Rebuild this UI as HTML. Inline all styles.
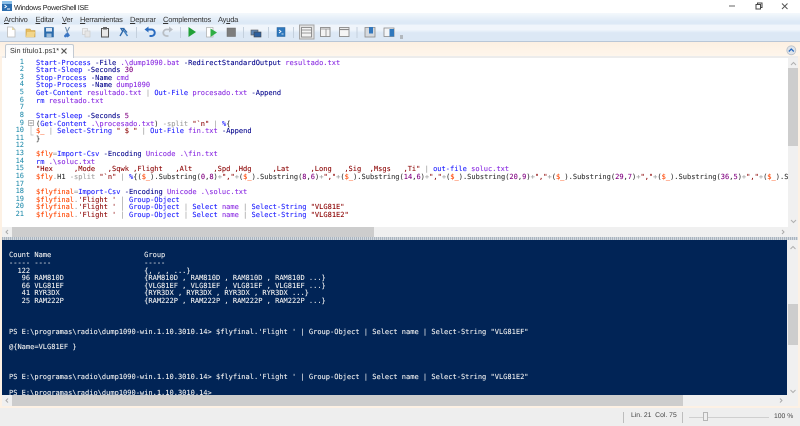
<!DOCTYPE html>
<html><head><meta charset="utf-8"><style>
html,body{margin:0;padding:0;width:800px;height:426px;overflow:hidden;background:#fff}
#w{position:absolute;left:0;top:0;width:800px;height:426px;overflow:hidden;filter:blur(.3px);font-family:"Liberation Sans",sans-serif;text-rendering:geometricPrecision}
.a{position:absolute}
pre{margin:0;position:absolute;font-family:"DejaVu Sans Mono","Liberation Mono",monospace;white-space:pre;text-rendering:geometricPrecision;-webkit-text-stroke:.08px currentColor}
.m{position:absolute;top:14.5px;font-size:7.500px;letter-spacing:-.2px;line-height:10px;color:#333}
.m u{text-decoration:underline}
b{font-weight:normal}
.c{color:#1a1aff}.p{color:#00008b}.g{color:#8a2be2}.s{color:#8b0000}.v{color:#ff4500}.o{color:#a0a0a0}.n{color:#800080}.k{color:#00008b}.t{color:#333}
</style></head><body><div id="w">
<div class="a" style="left:0;top:13px;width:800px;height:29px;background:linear-gradient(#f4f8fc 0,#dde9f6 30%,#dde9f6 38%,#f0f5fb 42%,#f0f5fb 58%,#dce8f5 68%,#dce8f5 100%)"></div>
<div class="a" style="left:0;top:40.5px;width:800px;height:1px;background:#b9c6d6"></div>
<div class="a" style="left:0;top:41.5px;width:800px;height:366px;background:#fdf1e4"></div>
<div class="a" style="left:0;top:42px;width:800px;height:14px;background:linear-gradient(#fdf0e2,#fef6ec)"></div>
<div class="a" style="left:2px;top:56px;width:796px;height:2px;background:#ececec"></div>
<div class="a" style="left:2px;top:58px;width:786px;height:169px;background:#fff"></div>

<!-- title -->
<svg class="a" style="left:2px;top:1px" width="11" height="11" viewBox="0 0 11 11"><rect x="0" y="0" width="10" height="10" fill="#2d6fb0"/><rect x="0" y="0" width="10" height="3" fill="#8cc0e8"/><path d="M2.5 4l2 1.5-2 1.5M5 8h3" stroke="#fff" fill="none" stroke-width="1"/></svg>
<div class="a" style="left:14px;top:2px;font-size:7.200px;letter-spacing:-.3px;line-height:11px;color:#222">Windows PowerShell ISE</div>
<svg class="a" style="left:720px;top:0" width="80" height="13" viewBox="0 0 80 13"><path d="M9 6h6" stroke="#666" stroke-width="1"/><path d="M36 4.5h4.500v4.500h-4.500zM37.500 4.500v-1.500h4.500v4.500h-1.500" stroke="#444" stroke-width="1" fill="none"/><path d="M62 3.500l5.500 5.500M67.500 3.500l-5.500 5.500" stroke="#555" stroke-width="1" fill="none"/></svg>

<!-- menu -->
<div class="m" style="left:4px"><u>A</u>rchivo</div>
<div class="m" style="left:35.500px"><u>E</u>ditar</div>
<div class="m" style="left:62px"><u>V</u>er</div>
<div class="m" style="left:80px"><u>H</u>erramientas</div>
<div class="m" style="left:130px"><u>D</u>epurar</div>
<div class="m" style="left:163px"><u>C</u>omplementos</div>
<div class="m" style="left:218px">Ay<u>u</u>da</div>

<!-- toolbar -->
<svg class="a" style="left:0;top:24px" width="420" height="17" viewBox="0 0 420 17">
<path d="M7.500 3h5l2.500 2.500v7.500h-7.500z" fill="#fff" stroke="#bbb" stroke-width=".8"/><path d="M12 3l3 3h-3z" fill="#e8d9a8"/>
<path d="M26 5h4l1 1.500h4v6.500h-9z" fill="#e6bd62" stroke="#c59a3c" stroke-width=".6"/><path d="M27 8h8l-1 5h-8z" fill="#f2d68c"/>
<rect x="44.500" y="3.500" width="9" height="9.500" fill="#2a6cae" stroke="#1e5c9a" stroke-width=".5"/><rect x="46" y="4" width="6" height="3.500" fill="#dde8f3"/><rect x="46.500" y="9.500" width="5" height="3.500" fill="#9dbcd9"/>
<path d="M69.500 3l-2.500 5M65.500 3l2 6" stroke="#6688aa" stroke-width="1" fill="none"/><path d="M65 10l3-1.500 2 3-2.500 2z" fill="#3a76c4"/><circle cx="65.500" cy="12" r="1.400" fill="#3a76c4"/>
<rect x="82.500" y="4.500" width="5" height="6" fill="#eee" stroke="#ccc" stroke-width=".7"/><rect x="85" y="7" width="5" height="6" fill="#e6e6e6" stroke="#ccc" stroke-width=".7"/>
<rect x="101.500" y="4.500" width="7" height="8.500" fill="#e8e8e8" stroke="#555" stroke-width="1"/><rect x="103" y="3" width="4" height="2.500" fill="#666"/>
<path d="M120 12l4-7 3 3.500M122.500 7l-1.500-2.500h3.500" stroke="#2c66a8" stroke-width="1.300" fill="none"/><path d="M124 7l3.500 5" stroke="#3f7fc0" stroke-width="1.500"/>
<path d="M136.500 3v11" stroke="#c4d0dd" stroke-width="1"/>
<path d="M146 5.500h5.500a3 3 0 0 1 0 6.500h-2" stroke="#2b6cc0" stroke-width="2" fill="none"/><path d="M148.500 2.500v6l-4-3z" fill="#2b6cc0"/>
<path d="M171 5.500h-4.500a3 3 0 0 0 0 6.500h2" stroke="#b9bec4" stroke-width="1.800" fill="none"/><path d="M169 2.500v6l4-3z" fill="#b9bec4"/>
<path d="M180.500 3v11" stroke="#c4d0dd" stroke-width="1"/>
<path d="M188.500 3l7.500 5-7.500 5z" fill="#21a038"/>
<rect x="206.500" y="3.500" width="6.500" height="9.500" fill="#fff" stroke="#aaa" stroke-width=".7"/><path d="M210.500 4.500l6.500 4-6.500 4.500z" fill="#2fae45"/>
<rect x="227" y="4" width="8.500" height="8.500" fill="#7d7d7d" stroke="#666" stroke-width=".5"/>
<path d="M243.500 3v11" stroke="#c4d0dd" stroke-width="1"/>
<rect x="251" y="6" width="7" height="5" fill="#5e88b8" stroke="#555" stroke-width=".6"/><rect x="254" y="8" width="7" height="5" fill="#2c5f9e" stroke="#444" stroke-width=".6"/>
<path d="M268.500 3v11" stroke="#c4d0dd" stroke-width="1"/>
<rect x="277" y="3.500" width="8" height="9" fill="#2f78bd" stroke="#245f98" stroke-width=".5"/><path d="M279 6l2 1.500-2 1.500M281.500 10h2" stroke="#fff" stroke-width=".8" fill="none"/>
<path d="M293.500 3v11" stroke="#c4d0dd" stroke-width="1"/>
<rect x="299.500" y="1" width="14.500" height="14" fill="#e2e2e2" stroke="#a5a5a5" stroke-width="1"/>
<rect x="301.500" y="3.500" width="10" height="9.500" fill="#f3f3f3" stroke="#7d7d7d" stroke-width=".8"/><path d="M301.500 6h10M301.500 9h10" stroke="#7d7d7d" stroke-width=".8"/>
<rect x="320.500" y="3.500" width="9.500" height="9" fill="#f3f3f3" stroke="#8a8a8a" stroke-width=".9"/><path d="M320.500 5h9.500M326 5v7.500" stroke="#8a8a8a" stroke-width=".8"/>
<rect x="339.500" y="3.500" width="9.500" height="9" fill="#f5f5f5" stroke="#8a8a8a" stroke-width=".9"/><path d="M339.500 5.500h9.500" stroke="#8a8a8a" stroke-width="1.200"/>
<path d="M357 3v11" stroke="#c4d0dd" stroke-width="1"/>
<rect x="365" y="3.500" width="10" height="9.500" fill="#d5d9de" stroke="#8a8a8a" stroke-width=".8"/><rect x="369" y="3" width="4" height="6.500" fill="#3277bd"/>
<rect x="384" y="4" width="10" height="8.500" fill="#f3f5f7" stroke="#8a8a8a" stroke-width=".8"/><rect x="389.500" y="5" width="4.500" height="7.500" fill="#2f78bd"/>
<path d="M400 12h3M400 14h3" stroke="#888" stroke-width=".9"/>
</svg>

<!-- tab -->
<div class="a" style="left:5px;top:43.500px;width:68.500px;height:14.500px;background:linear-gradient(#fafafa,#fff);border:1px solid #c3cad2;border-bottom:none;border-radius:2px 2px 0 0;box-sizing:border-box"></div>
<div class="a" style="left:10px;top:46px;font-size:7.300px;line-height:10px;color:#333">Sin título1.ps1*</div>
<svg class="a" style="left:60px;top:47px" width="9" height="9"><path d="M1.500 1.500l5 5M6.500 1.500l-5 5" stroke="#555" stroke-width="1.200"/></svg>
<svg class="a" style="left:785px;top:44px" width="13" height="13"><circle cx="6.300" cy="6.300" r="4.500" fill="#dfe4ea" stroke="#b9bfc6" stroke-width=".8"/><path d="M3.800 7.500l2.500-2.500 2.500 2.500" stroke="#2b6cc0" stroke-width="1.300" fill="none"/></svg>

<!-- line numbers -->
<pre style="left:8px;top:58.500px;width:16px;text-align:right;font-size:7px;line-height:7.625px;color:#2b91af">1
2
3
4
5
6
7
8
9
10
11
12
13
14
15
16
17
18
19
20
21</pre>
<!-- fold -->
<svg class="a" style="left:28px;top:120px" width="8" height="20"><rect x=".5" y=".5" width="5" height="5" fill="#fff" stroke="#999" stroke-width=".7"/><path d="M1.500 3h3" stroke="#555" stroke-width=".7"/><path d="M3 5.500v9.500h2.500" stroke="#bbb" stroke-width=".7" fill="none"/></svg>

<!-- code -->
<div class="a" style="left:36px;top:58px;width:752px;height:168px;overflow:hidden">
<pre style="left:0;top:.5px;font-size:7.030px;line-height:7.625px;color:#000"><b class="c">Start-Process</b> <b class="p">-File</b> <b class="g">.\dump1090.bat</b> <b class="p">-RedirectStandardOutput</b> <b class="g">resultado.txt</b>
<b class="c">Start-Sleep</b> <b class="p">-Seconds</b> <b class="n">30</b>
<b class="c">Stop-Process</b> <b class="p">-Name</b> <b class="g">cmd</b>
<b class="c">Stop-Process</b> <b class="p">-Name</b> <b class="g">dump1090</b>
<b class="c">Get-Content</b> <b class="g">resultado.txt</b> <b class="o">|</b> <b class="c">Out-File</b> <b class="g">procesado.txt</b> <b class="p">-Append</b>
<b class="c">rm</b> <b class="g">resultado.txt</b>

<b class="c">Start-Sleep</b> <b class="p">-Seconds</b> <b class="n">5</b>
<b class="t">(</b><b class="c">Get-Content</b> <b class="g">.\procesado.txt</b><b class="t">)</b> <b class="o">-split</b> <b class="s">"`n"</b> <b class="o">|</b> <b class="c">%</b><b class="t">{</b>
<b class="v">$_</b> <b class="o">|</b> <b class="c">Select-String</b> <b class="s">" $ "</b> <b class="o">|</b> <b class="c">Out-File</b> <b class="g">fin.txt</b> <b class="p">-Append</b>
<b class="t">}</b>

<b class="v">$fly</b><b class="o">=</b><b class="c">Import-Csv</b> <b class="p">-Encoding</b> <b class="g">Unicode</b> <b class="g">.\fin.txt</b>
<b class="c">rm</b> <b class="g">.\soluc.txt</b>
<b class="s">"Hex     ,Mode   ,Sqwk ,Flight   ,Alt     ,Spd ,Hdg     ,Lat     ,Long   ,Sig  ,Msgs   ,Ti"</b> <b class="o">|</b> <b class="c">out-file</b> <b class="g">soluc.txt</b>
<b class="v">$fly</b><b class="o">.</b><b class="t">H1</b> <b class="o">-split</b> <b class="s">"`n"</b> <b class="o">|</b> <b class="c">%</b><b class="t">{(</b><b class="v">$_</b><b class="t">).Substring(</b><b class="n">0</b><b class="t">,</b><b class="n">8</b><b class="t">)</b><b class="o">+</b><b class="s">","</b><b class="o">+</b><b class="t">(</b><b class="v">$_</b><b class="t">).Substring(</b><b class="n">8</b><b class="t">,</b><b class="n">6</b><b class="t">)</b><b class="o">+</b><b class="s">","</b><b class="o">+</b><b class="t">(</b><b class="v">$_</b><b class="t">).Substring(</b><b class="n">14</b><b class="t">,</b><b class="n">6</b><b class="t">)</b><b class="o">+</b><b class="s">","</b><b class="o">+</b><b class="t">(</b><b class="v">$_</b><b class="t">).Substring(</b><b class="n">20</b><b class="t">,</b><b class="n">9</b><b class="t">)</b><b class="o">+</b><b class="s">","</b><b class="o">+</b><b class="t">(</b><b class="v">$_</b><b class="t">).Substring(</b><b class="n">29</b><b class="t">,</b><b class="n">7</b><b class="t">)</b><b class="o">+</b><b class="s">","</b><b class="o">+</b><b class="t">(</b><b class="v">$_</b><b class="t">).Substring(</b><b class="n">36</b><b class="t">,</b><b class="n">5</b><b class="t">)</b><b class="o">+</b><b class="s">","</b><b class="o">+</b><b class="t">(</b><b class="v">$_</b><b class="t">).Substring</b>

<b class="v">$flyfinal</b><b class="o">=</b><b class="c">Import-Csv</b> <b class="p">-Encoding</b> <b class="g">Unicode</b> <b class="g">.\soluc.txt</b>
<b class="v">$flyfinal</b><b class="o">.</b><b class="s">'Flight '</b> <b class="o">|</b> <b class="c">Group-Object</b>
<b class="v">$flyfinal</b><b class="o">.</b><b class="s">'Flight '</b> <b class="o">|</b> <b class="c">Group-Object</b> <b class="o">|</b> <b class="c">Select</b> <b class="g">name</b> <b class="o">|</b> <b class="c">Select-String</b> <b class="s">"VLG81E"</b>
<b class="v">$flyfinal</b><b class="o">.</b><b class="s">'Flight '</b> <b class="o">|</b> <b class="c">Group-Object</b> <b class="o">|</b> <b class="c">Select</b> <b class="g">name</b> <b class="o">|</b> <b class="c">Select-String</b> <b class="s">"VLG81E2"</b></pre>
</div>

<!-- editor scrollbars -->
<div class="a" style="left:788px;top:58px;width:10px;height:169px;background:#f0f0f0"></div>
<div class="a" style="left:788px;top:68px;width:10px;height:78px;background:#cdcdcd"></div>
<svg class="a" style="left:788px;top:58px" width="11" height="169"><path d="M3 7l2.500-2.500 2.500 2.500" stroke="#b0b0b0" fill="none"/><path d="M3 162l2.500 2.500 2.500-2.500" stroke="#b0b0b0" fill="none"/></svg>
<div class="a" style="left:2px;top:227px;width:796px;height:10px;background:#f0f0f0"></div>
<div class="a" style="left:12px;top:227px;width:362px;height:10px;background:#cdcdcd"></div>
<svg class="a" style="left:2px;top:227px" width="12" height="10"><path d="M6 3l-2 2 2 2" stroke="#aaa" fill="none"/></svg>
<svg class="a" style="left:780px;top:227px" width="10" height="10"><path d="M2 3l2 2-2 2" stroke="#aaa" fill="none"/></svg>
<div class="a" style="left:2px;top:237px;width:796px;height:3px;background:repeating-linear-gradient(90deg,#a9b4bf 0 1px,#d3d9df 1px 2px)"></div>

<!-- console -->
<div class="a" style="left:2px;top:240px;width:785px;height:155px;background:#012456;overflow:hidden">
<pre style="left:7px;top:11.300px;font-size:7.030px;line-height:7.625px;color:#f0f0f0">Count Name                      Group
----- ----                      -----
  122                           {, , , ...}
   96 RAM810D                   {RAM810D , RAM810D , RAM810D , RAM810D ...}
   66 VLG81EF                   {VLG81EF , VLG81EF , VLG81EF , VLG81EF ...}
   41 RYR3DX                    {RYR3DX , RYR3DX , RYR3DX , RYR3DX ...}
   25 RAM222P                   {RAM222P , RAM222P , RAM222P , RAM222P ...}



PS E:\programas\radio\dump1090-win.1.10.3010.14&gt; $flyfinal.'Flight ' | Group-Object | Select name | Select-String "VLG81EF"

@{Name=VLG81EF }



PS E:\programas\radio\dump1090-win.1.10.3010.14&gt; $flyfinal.'Flight ' | Group-Object | Select name | Select-String "VLG81E2"

PS E:\programas\radio\dump1090-win.1.10.3010.14&gt;</pre>
</div>
<div class="a" style="left:787px;top:240px;width:11px;height:166px;background:#f0f0f0"></div>
<div class="a" style="left:788px;top:304px;width:10px;height:41px;background:#cdcdcd"></div>
<svg class="a" style="left:787px;top:240px" width="11" height="160"><path d="M3.500 9l2.500-2.500 2.500 2.500" stroke="#b0b0b0" fill="none"/><path d="M3.500 150l2.500 2.500 2.500-2.500" stroke="#b0b0b0" fill="none"/></svg>
<div class="a" style="left:2px;top:395px;width:796px;height:11px;background:#f0f0f0"></div>
<div class="a" style="left:12px;top:395px;width:671px;height:11px;background:#cdcdcd"></div>
<svg class="a" style="left:2px;top:395px" width="12" height="11"><path d="M6 3.500l-2 2 2 2" stroke="#aaa" fill="none"/></svg>
<svg class="a" style="left:778px;top:395px" width="10" height="11"><path d="M2 3.500l2 2-2 2" stroke="#aaa" fill="none"/></svg>

<!-- status -->
<div class="a" style="left:0;top:407.500px;width:800px;height:18.500px;background:#eeeeee"></div>
<div class="a" style="left:623px;top:412px;width:1px;height:11px;background:#bdbdbd"></div>
<div class="a" style="left:631px;top:411px;font-size:6.800px;line-height:10px;color:#444">Lin. 21&nbsp; Col. 75</div>
<div class="a" style="left:682px;top:412px;width:1px;height:11px;background:#bdbdbd"></div>
<div class="a" style="left:689px;top:416.500px;width:80px;height:1px;background:#cfcfcf"></div>
<div class="a" style="left:703px;top:412px;width:5px;height:9px;background:#eee;border:1px solid #b5b5b5;box-sizing:border-box"></div>
<div class="a" style="left:774px;top:411.500px;font-size:6.800px;line-height:10px;color:#444">100 %</div>
</div></body></html>
